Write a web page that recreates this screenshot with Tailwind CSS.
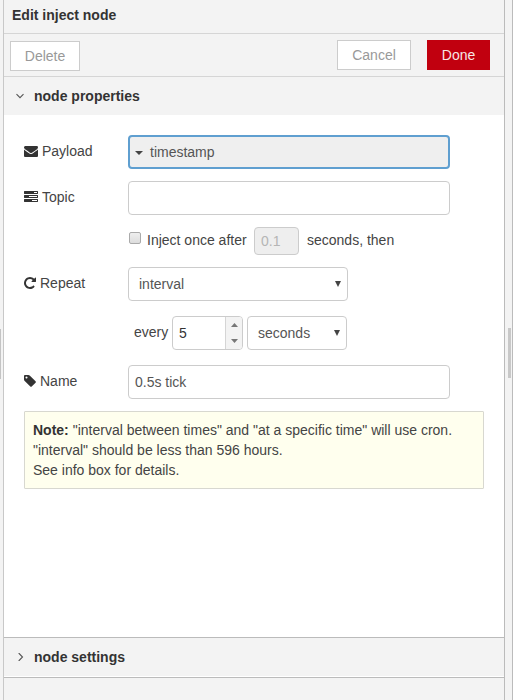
<!DOCTYPE html>
<html lang="en">
<head>
<meta charset="utf-8">
<title>Edit inject node</title>
<script src="https://cdn.jsdelivr.net/npm/@tailwindcss/browser@4"></script>
</head>
<body class="w-[513px] h-[700px] overflow-hidden flex bg-[#f3f3f3] text-[14px] leading-5 text-[#444] font-['Liberation_Sans',Arial,sans-serif]">
  <div class="w-1 shrink-0 border-r border-[#c8c8c8] flex items-center pt-2">
    <div class="w-px h-[50px] bg-[#c4c4c4]"></div>
  </div>
  <main class="w-[500px] shrink-0 flex flex-col">
    <header class="h-[34px] shrink-0 border-b border-[#d5d5d5] pl-2 pt-[5px] font-bold text-[#333]">Edit inject node</header>
    <div class="h-[43px] shrink-0 border-b border-[#d5d5d5] flex items-start pl-1.5 pr-3.5 pt-1.5">
      <button class="w-[70px] h-[30px] mt-px border border-[#ccc] bg-white text-[#999]">Delete</button>
      <button class="w-[74px] h-[30px] ml-auto border border-[#ccc] bg-white text-[#999]">Cancel</button>
      <button class="w-[63px] h-[30px] ml-4 bg-[#c1000f] text-[#f6e6e6]">Done</button>
    </div>
    <div class="h-[38px] shrink-0 flex items-center font-bold text-[#333] pl-3">
      <svg class="w-2 h-2 mr-2.5" viewBox="0 0 8 8" fill="none" stroke="#555" stroke-width="1.1"><path d="M.5 2.2 4 5.7 7.5 2.2"/></svg>
      node properties
    </div>
    <section class="h-[522px] shrink-0 bg-white pl-5 pt-5 text-[#555]">
      <div class="flex h-[34px] mb-3">
        <div class="w-[104px] flex items-start pt-1.5 text-[#444]">
          <svg class="w-3.5 h-3.5 mt-[3px] mr-1" viewBox="0 0 1792 1792" fill="#333"><path d="M1792 710v794q0 66-47 113t-113 47h-1472q-66 0-113-47t-47-113v-794q44 49 101 87 362 246 497 345 57 42 92.500 65.500t94.500 48 110 24.500h2q51 0 110-24.500t94.500-48 92.500-65.500q170-123 498-345 57-39 100-87zm0-294q0 79-49 151t-122 123q-376 261-468 325-10 7-42.500 31t-54 38.500-52 32.500-57.500 27-50 9h-2q-23 0-50-9t-57.500-27-52-32.500-54-38.500-42.500-31q-91-64-262-182.500t-205-142.500q-62-42-117-115.500t-55-136.500q0-78 41.500-130t118.500-52h1472q65 0 112.500 47t47.500 113z"/></svg>Payload
        </div>
        <div class="w-[322px] h-[34px] rounded border-2 border-[#5f9fd0] bg-[#efefef] flex items-center pl-[5px]">
          <svg class="w-2 h-1 mr-[7px] mt-0.5" viewBox="0 0 8 4" fill="#444"><path d="M0 0h8L4 4z"/></svg>timestamp
        </div>
      </div>
      <div class="flex h-[34px] mb-3">
        <div class="w-[104px] flex items-start pt-1.5 text-[#444]">
          <svg class="w-3.5 h-3.5 mt-[3px] mr-1" viewBox="0 0 1792 1792" fill="#333"><path d="M1024 1408h640v-128h-640v128zm-384-512h1024v-128h-1024v128zm640-512h384v-128h-384v128zm512 832v256q0 26-19 45t-45 19h-1664q-26 0-45-19t-19-45v-256q0-26 19-45t45-19h1664q26 0 45 19t19 45zm0-512v256q0 26-19 45t-45 19h-1664q-26 0-45-19t-19-45v-256q0-26 19-45t45-19h1664q26 0 45 19t19 45zm0-512v256q0 26-19 45t-45 19h-1664q-26 0-45-19t-19-45v-256q0-26 19-45t45-19h1664q26 0 45 19t19 45z"/></svg>Topic
        </div>
        <div class="w-[322px] h-[34px] rounded border border-[#ccc] bg-white"></div>
      </div>
      <div class="flex h-7 mb-3 pl-[105px] items-start">
        <div class="w-3 h-3 mt-[5px] rounded-[2px] border border-[#aaa] bg-linear-to-b from-[#eee] to-[#ddd]"></div>
        <span class="ml-1.5 mt-[3px] w-[107px] whitespace-nowrap text-[#444]">Inject once after</span>
        <div class="w-[45px] h-7 rounded border border-[#ccc] bg-[#eee] pl-1.5 pt-[3px] text-[#b5b5b5]">0.1</div>
        <span class="ml-2 mt-[3px] text-[#444]">seconds, then</span>
      </div>
      <div class="flex h-[34px] mb-[15px]">
        <div class="w-[104px] flex items-start pt-1.5 text-[#444]">
          <svg class="w-3 h-3.5 mt-[3px] mr-1" viewBox="128 0 1536 1792" fill="#333"><path d="M1664 256v448q0 26-19 45t-45 19h-448q-42 0-59-40-17-39 14-69l138-138q-148-137-349-137-104 0-198.500 40.500t-163.500 109.500-109.500 163.500-40.500 198.500 40.500 198.500 109.500 163.500 163.500 109.500 198.500 40.500q119 0 225-52t179-147q7-10 23-12 15 0 25 9l137 138q9 8 9.500 20.500t-7.500 22.500q-109 132-264 204.500t-327 72.500q-156 0-298-61t-245-164-164-245-61-298 61-298 164-245 245-164 298-61q147 0 284.500 55.500t244.500 156.500l130-129q29-31 70-14 39 17 39 59z"/></svg>Repeat
        </div>
        <div class="w-[220px] h-[34px] rounded border border-[#ccc] bg-white flex items-center justify-between pl-2.5 pr-1.5">
          interval<svg class="w-1.5 h-1.5" viewBox="0 0 6 6" fill="#444"><path d="M0 0h6L3 6z"/></svg>
        </div>
      </div>
      <div class="flex h-[34px] mb-[15px] pl-[110px]">
        <span class="w-[38px] pt-1.5 text-[#444]">every</span>
        <div class="w-[71px] h-[34px] rounded border border-[#ccc] bg-white flex overflow-hidden">
          <div class="w-[52px] pl-1.5 pt-1.5 text-[#333]">5</div>
          <div class="flex-1 border-l border-[#d5d5d5] bg-[#f3f3f3] flex flex-col items-center justify-between py-1.5">
            <svg class="w-[7px] h-1" viewBox="0 0 7 4" fill="#777"><path d="M0 4h7L3.500 0z"/></svg>
            <svg class="w-[7px] h-1" viewBox="0 0 7 4" fill="#777"><path d="M0 0h7L3.500 4z"/></svg>
          </div>
        </div>
        <div class="w-[100px] h-[34px] ml-1 rounded border border-[#ccc] bg-white flex items-center justify-between pl-2.5 pr-1.5">
          seconds<svg class="w-1.5 h-1.5" viewBox="0 0 6 6" fill="#444"><path d="M0 0h6L3 6z"/></svg>
        </div>
      </div>
      <div class="flex h-[34px] mb-3">
        <div class="w-[104px] flex items-start pt-1.5 text-[#444]">
          <svg class="w-3 h-3.5 mt-[3px] mr-1" viewBox="128 0 1536 1792" fill="#333"><path d="M576 448q0-53-37.500-90.500t-90.500-37.500-90.500 37.500-37.500 90.500 37.500 90.500 90.500 37.500 90.500-37.500 37.500-90.500zm1067 576q0 53-37 90l-491 492q-39 37-91 37-53 0-90-37l-715-716q-38-37-64.500-101t-26.500-117v-416q0-52 38-90t90-38h416q53 0 117 26.500t102 64.500l715 714q37 39 37 91z"/></svg>Name
        </div>
        <div class="w-[322px] h-[34px] rounded border border-[#ccc] bg-white flex items-center pl-1.5">0.5s tick</div>
      </div>
      <div class="w-[460px] h-[78px] rounded-[1px] border border-[#d8d8d0] bg-[#ffffee] pl-2 pt-2 text-[#444] whitespace-nowrap">
        <b class="text-[#333]">Note:</b> "interval between times" and "at a specific time" will use cron.<br>"interval" should be less than 596 hours.<br>See info box for details.
      </div>
    </section>
    <div class="h-[40px] shrink-0 border-t border-[#bbb] border-b border-b-white flex items-center font-bold text-[#333] pl-3">
      <svg class="w-2 h-2 mr-2.5" viewBox="0 0 8 8" fill="none" stroke="#555" stroke-width="1.1"><path d="M2.700 0 6.500 4 2.700 8"/></svg>
      node settings
    </div>
    <footer class="flex-1 border-t border-[#bbb]"></footer>
  </main>
  <div class="w-[9px] shrink-0 border-x border-[#bbb] flex items-start justify-end pr-px pt-[328px]">
    <div class="w-[3px] h-[50px] bg-[#c8c8c8]"></div>
  </div>
</body>
</html>
